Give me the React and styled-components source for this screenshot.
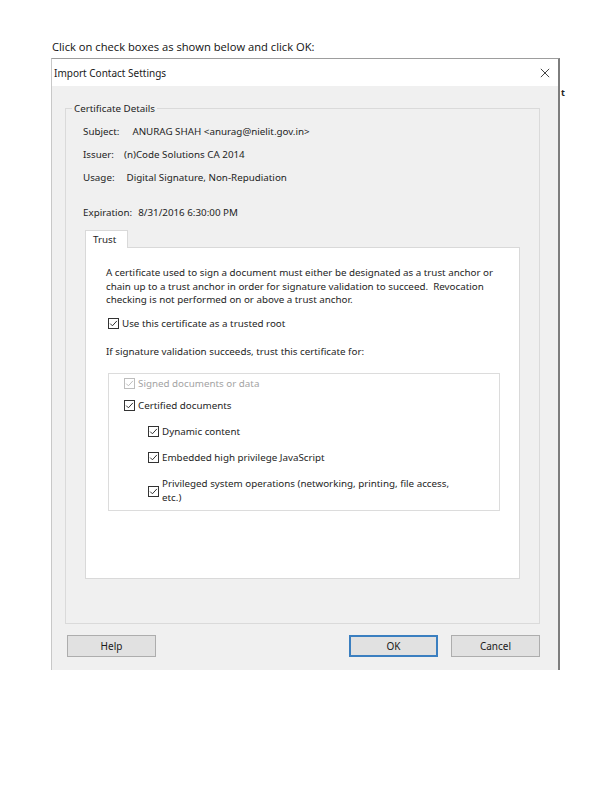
import React from "react";
import styled, { createGlobalStyle } from "styled-components";

const GlobalStyle = createGlobalStyle`
  html, body {
    margin: 0;
    padding: 0;
    background: #ffffff;
  }
  body {
    font-family: "Noto Sans", "Open Sans", sans-serif;
    color: #1e1e1e;
  }
`;

const UI_FONT = `"Noto Sans", "Open Sans", sans-serif`;

export default function App() {
  return (
    <Page>
      <GlobalStyle />
      <Caption>Click on check boxes as shown below and click OK:</Caption>
      <DialogRow>
        <Dialog>
          <TitleBar>
            <Title>Import Contact Settings</Title>
            <CloseIcon viewBox="0 0 12 12">
              <path d="M1 1 L11 11 M11 1 L1 11" stroke="#333" strokeWidth="1.1" fill="none" />
            </CloseIcon>
          </TitleBar>
          <Body>
            <GroupBox>
              <Legend>Certificate Details</Legend>
              <DetailRow $gap={13}>
                <span>Subject:</span>
                <span>ANURAG SHAH &lt;anurag@nielit.gov.in&gt;</span>
              </DetailRow>
              <DetailRow $gap={10}>
                <span>Issuer:</span>
                <span>(n)Code Solutions CA 2014</span>
              </DetailRow>
              <DetailRow $gap={12}>
                <span>Usage:</span>
                <span>Digital Signature, Non-Repudiation</span>
              </DetailRow>
              <DetailRow $gap={6} $top={21}>
                <span>Expiration:</span>
                <span>8/31/2016 6:30:00 PM</span>
              </DetailRow>

              <Tabs>
                <TabStrip>
                  <Tab>Trust</Tab>
                </TabStrip>
                <TabPanel>
                  <Paragraph>
                    A certificate used to sign a document must either be designated as a trust anchor or
                    chain up to a trust anchor in order for signature validation to succeed.&nbsp; Revocation
                    checking is not performed on or above a trust anchor.
                  </Paragraph>
                  <CheckRow $top={10} $indent={2}>
                    <Check />
                    <span>Use this certificate as a trusted root</span>
                  </CheckRow>
                  <Paragraph $top={14}>If signature validation succeeds, trust this certificate for:</Paragraph>
                  <TrustBox>
                    <CheckRow $disabled>
                      <Check disabled />
                      <span>Signed documents or data</span>
                    </CheckRow>
                    <CheckRow $top={8}>
                      <Check />
                      <span>Certified documents</span>
                    </CheckRow>
                    <SubList>
                      <CheckRow>
                        <Check />
                        <span>Dynamic content</span>
                      </CheckRow>
                      <CheckRow>
                        <Check />
                        <span>Embedded high privilege JavaScript</span>
                      </CheckRow>
                      <CheckRow $center>
                        <Check />
                        <span>
                          Privileged system operations (networking, printing, file access,
                          <br />
                          etc.)
                        </span>
                      </CheckRow>
                    </SubList>
                  </TrustBox>
                </TabPanel>
              </Tabs>
            </GroupBox>
            <ButtonRow>
              <Button>Help</Button>
              <Spacer />
              <Button $primary>OK</Button>
              <Button>Cancel</Button>
            </ButtonRow>
          </Body>
        </Dialog>
        <Peek>t</Peek>
      </DialogRow>
    </Page>
  );
}

function Check({ disabled }) {
  const c = disabled ? "#bdbdbd" : "#333333";
  return (
    <CheckBox viewBox="0 0 11 11">
      <rect x="0.5" y="0.5" width="10" height="10" fill="#fff" stroke={c} strokeWidth="1" />
      <path d="M2.2 5.6 L4.4 7.8 L8.9 2.9" stroke={c} strokeWidth="1" fill="none" />
    </CheckBox>
  );
}

const Page = styled.div`
  width: 611px;
  height: 800px;
  padding: 40px 0 0 51px;
  box-sizing: border-box;
`;

const Caption = styled.div`
  font-family: "Open Sans", "Liberation Sans", sans-serif;
  font-size: 11.2px;
  line-height: 14px;
  height: 18px;
  padding-left: 1px;
  color: #111;
`;

const DialogRow = styled.div`
  display: flex;
  align-items: flex-start;
`;

const Dialog = styled.div`
  width: 506px;
  height: 611px;
  border-top: 1px solid #9d9d9d;
  border-left: 1px solid #c8c8c8;
  border-right: 2px solid #7d7d7d;
  background: #f0f0f0;
  display: flex;
  flex-direction: column;
  font-family: ${UI_FONT};
  font-size: 9.8px;
`;

const Peek = styled.div`
  font-family: ${UI_FONT};
  font-size: 9px;
  font-weight: bold;
  padding: 28px 0 0 1px;
  color: #222;
`;

const TitleBar = styled.div`
  height: 27px;
  background: #fff;
  display: flex;
  align-items: center;
  justify-content: space-between;
  padding: 0 8px 0 2px;
`;

const Title = styled.span`
  font-size: 10px;
  color: #1a1a1a;
`;

const CloseIcon = styled.svg`
  width: 10px;
  height: 10px;
`;

const Body = styled.div`
  flex: 1;
  display: flex;
  flex-direction: column;
  padding: 16px 18px 12px 13px;
`;

const GroupBox = styled.fieldset`
  margin: 0;
  height: 522px;
  box-sizing: border-box;
  border: 1px solid #dadada;
  padding: 1px 18px 0 17px;
  min-width: 0;
`;

const Legend = styled.legend`
  padding: 0 2px;
  margin-left: -11px;
  color: #1e1e1e;
`;

const DetailRow = styled.div`
  display: flex;
  gap: ${(p) => p.$gap}px;
  margin-top: ${(p) => p.$top ?? 9}px;
  line-height: 14px;
`;

const Tabs = styled.div`
  margin: 10px 0 0 2px;
  width: 435px;
`;

const TabStrip = styled.div`
  display: flex;
  position: relative;
  z-index: 1;
  margin-bottom: -1px;
`;

const Tab = styled.div`
  width: 43px;
  height: 18px;
  box-sizing: border-box;
  background: #fff;
  border: 1px solid #d9d9d9;
  border-bottom: none;
  padding: 2px 0 0 7px;
  line-height: 14px;
`;

const TabPanel = styled.div`
  height: 332px;
  box-sizing: border-box;
  background: #fff;
  border: 1px solid #d9d9d9;
  padding: 18px 19px 0 20px;
`;

const Paragraph = styled.p`
  margin: ${(p) => p.$top ?? 0}px 0 0;
  line-height: 13.6px;
`;

const CheckRow = styled.div`
  display: flex;
  align-items: ${(p) => (p.$center ? "center" : "flex-start")};
  gap: 3px;
  margin-top: ${(p) => p.$top ?? 0}px;
  margin-left: ${(p) => p.$indent ?? 0}px;
  line-height: 14px;
  color: ${(p) => (p.$disabled ? "#a3a3a3" : "inherit")};
`;

const CheckBox = styled.svg`
  width: 11px;
  height: 11px;
  flex: none;
  margin-top: 1px;
`;

const TrustBox = styled.div`
  margin: 15px 0 0 2px;
  height: 138px;
  box-sizing: border-box;
  border: 1px solid #dcdcdc;
  padding: 3px 0 0 15px;
`;

const SubList = styled.div`
  display: flex;
  flex-direction: column;
  gap: 12px;
  margin: 12px 0 0 24px;
`;

const ButtonRow = styled.div`
  display: flex;
  gap: 13px;
  margin-top: 11px;
  padding-left: 2px;
`;

const Spacer = styled.div`
  flex: 1;
`;

const Button = styled.div`
  width: 89px;
  height: 22px;
  box-sizing: border-box;
  display: flex;
  align-items: center;
  justify-content: center;
  background: #e1e1e1;
  border: ${(p) => (p.$primary ? "2px solid #3b7fc0" : "1px solid #adadad")};
  font-size: 10px;
  color: #1a1a1a;
`;
